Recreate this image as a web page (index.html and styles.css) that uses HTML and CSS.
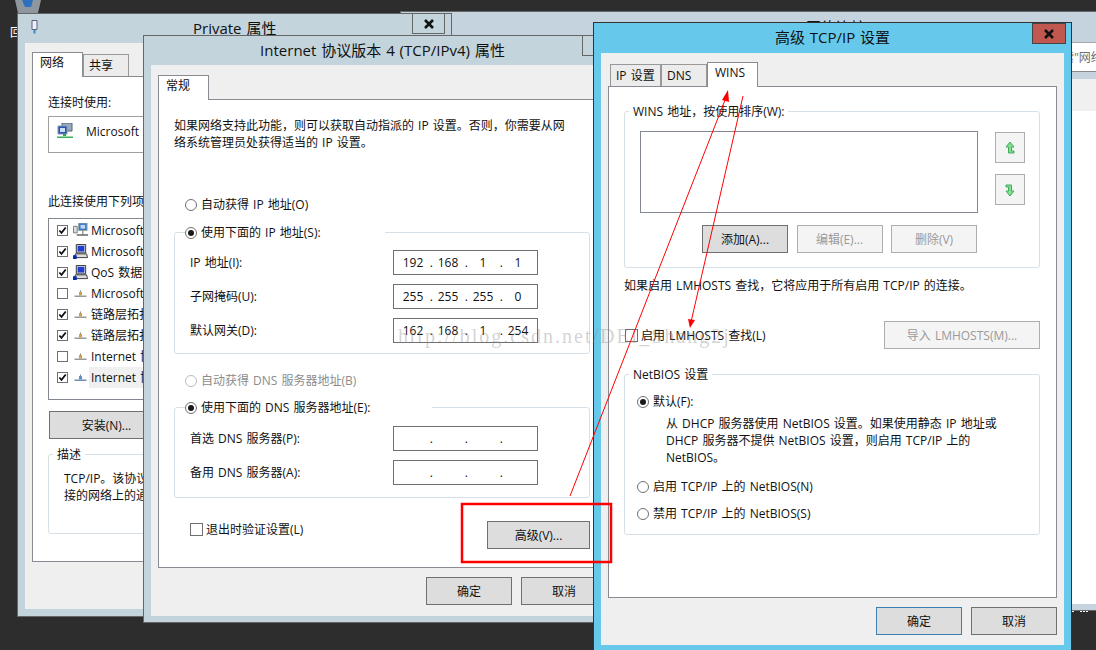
FILE: index.html
```html
<!DOCTYPE html>
<html lang="zh-CN">
<head>
    <meta charset="UTF-8">
    <title>高级 TCP/IP 设置</title>
    <link rel="stylesheet" href="styles.css">
</head>
<body>
<svg class="defs" width="0" height="0">
    <symbol id="ic-check" viewBox="0 0 10 10"><path d="M1.5 5l2.4 2.6L8.6 1.6" fill="none" stroke="#111" stroke-width="2"/></symbol>
    <symbol id="ic-proto" viewBox="0 0 15 15"><path d="M1.5 9.5h12v1.5h-12z" fill="#9a9a9a"/><path d="M6 6h3v3.5H6z" fill="#c9a24a"/><path d="M7 4.5h1V6H7z" fill="#8a8a8a"/></symbol>
    <symbol id="ic-proto-blue" viewBox="0 0 15 15"><path d="M1.5 9.5h12v1.5h-12z" fill="#6f8fb5"/><path d="M6 6h3v3.5H6z" fill="#5b93c9"/><path d="M7 4.5h1V6H7z" fill="#7a8a9a"/></symbol>
    <symbol id="ic-pc" viewBox="0 0 16 16"><path d="M3.5 0.5h10v9h-10z" fill="#ccd" stroke="#333"/><path d="M5 2h7v6H5z" fill="#1f3fd0"/><path d="M2.5 10.5h12l1 4h-14z" fill="#ddd" stroke="#333"/><path d="M0 12h4v4H0z" fill="#0a2bb0"/></symbol>
    <symbol id="ic-client" viewBox="0 0 16 16"><path d="M0.5 3.5h4v7h-4z" fill="#ddd" stroke="#777"/><path d="M6 0h9v8H6z" fill="#3d72c8" stroke="#8aa"/><path d="M8 2h5v4H8z" fill="#bcd7f2"/><path d="M10 8h1v4h-1zM4 12h12v1.5H4z" fill="#666"/></symbol>
    <symbol id="ic-adapter" viewBox="0 0 16 16"><path d="M5 0h10v8H5z" fill="#9ab" stroke="#567"/><path d="M1 3h9v8H1z" fill="#2553b8" stroke="#89a"/><path d="M3 5h5v4H3z" fill="#cfe0f5"/><path d="M6 11h3v2H6z" fill="#2aa84a"/><path d="M0 13.5h16V15H0z" fill="#35b25c"/></symbol>
    <symbol id="ic-close" viewBox="0 0 12 10"><path d="M2 1l8 8M10 1L2 9" stroke="#111" stroke-width="2.6" fill="none"/></symbol>
</svg>

<div class="desktop">
    <svg class="bin" viewBox="0 0 26 13"><path d="M0 0h26l-3 13H3z" fill="#8f979e"/><path d="M7 0h11l-2 7h-6z" fill="#2f6fc0"/></svg>
    <div class="desk-label">回收站</div>
    <div class="desk-spots"></div>

    <!-- network connections, behind everything -->
    <section class="win win-back">
        <div class="back-title">网络连接</div>
        <div class="back-search">搜索"网络连接"</div>
        <div class="back-toolbar"></div>
        <div class="back-files"></div>
    </section>

    <!-- Private properties -->
    <section class="win win-private">
        <header class="win-head">
            <svg class="head-icon" viewBox="0 0 8 14"><path d="M1.5 .5h5v9h-5z" fill="#eef" stroke="#567"/><path d="M3 10h2v3.5H3z" fill="#38c"/></svg>
            <h1 class="win-title title-private">Private 属性</h1>
            <button class="close close-plain"><svg><use href="#ic-close"/></svg></button>
        </header>
        <div class="win-body">
            <div class="tabs">
                <div class="tab tab-on tab-w51">网络</div>
                <div class="tab tab-w46">共享</div>
            </div>
            <div class="page page-private">
                <p class="line">连接时使用:</p>
                <div class="adapter-box">
                    <svg class="icon16"><use href="#ic-adapter"/></svg>
                    <span>Microsoft Hyper-V 网络适配器</span>
                </div>
                <p class="line items-label">此连接使用下列项目(O):</p>
                <ul class="items">
                    <li><span class="check on"><svg><use href="#ic-check"/></svg></span><svg class="icon15"><use href="#ic-client"/></svg>Microsoft 网络客户端</li>
                    <li><span class="check on"><svg><use href="#ic-check"/></svg></span><svg class="icon15"><use href="#ic-pc"/></svg>Microsoft 网络的文件和打印机共享</li>
                    <li><span class="check on"><svg><use href="#ic-check"/></svg></span><svg class="icon15"><use href="#ic-pc"/></svg>QoS 数据包计划程序</li>
                    <li><span class="check"></span><svg class="icon15"><use href="#ic-proto"/></svg>Microsoft 网络适配器多路传送器协议</li>
                    <li><span class="check on"><svg><use href="#ic-check"/></svg></span><svg class="icon15"><use href="#ic-proto"/></svg>链路层拓扑发现映射器 I/O 驱动程序</li>
                    <li><span class="check on"><svg><use href="#ic-check"/></svg></span><svg class="icon15"><use href="#ic-proto"/></svg>链路层拓扑发现响应程序</li>
                    <li><span class="check"></span><svg class="icon15"><use href="#ic-proto"/></svg>Internet 协议版本 6 (TCP/IPv6)</li>
                    <li><span class="check on"><svg><use href="#ic-check"/></svg></span><svg class="icon15"><use href="#ic-proto-blue"/></svg><span class="item-sel">Internet 协议版本 4 (TCP/IPv4)</span></li>
                </ul>
                <button class="btn btn-install">安装(N)...</button>
                <div class="group group-desc">
                    <div class="legend">描述</div>
                    <p class="line">TCP/IP。该协议是默认的广域网络协议，它提供在不同的<br>接的网络上的通讯。</p>
                </div>
            </div>
        </div>
    </section>

    <!-- IPv4 properties -->
    <section class="win win-ipv4">
        <header class="win-head">
            <h1 class="win-title">Internet 协议版本 4 (TCP/IPv4) 属性</h1>
            <button class="close close-plain"><svg><use href="#ic-close"/></svg></button>
        </header>
        <div class="win-body">
            <div class="tabs">
                <div class="tab tab-on tab-w51">常规</div>
            </div>
            <div class="page page-ipv4">
                <p class="line">如果网络支持此功能，则可以获取自动指派的 IP 设置。否则，你需要从网<br>络系统管理员处获得适当的 IP 设置。</p>
                <label class="radio-row auto-ip"><span class="radio"></span>自动获得 IP 地址(O)</label>
                <div class="group group-ip">
                    <label class="radio-row legend-radio legend-ip"><span class="radio on"></span>使用下面的 IP 地址(S):</label>
                    <div class="field"><span>IP 地址(I):</span>
                        <div class="ip"><span class="oct">192</span><span class="dot">.</span><span class="oct">168</span><span class="dot">.</span><span class="oct">1</span><span class="dot">.</span><span class="oct">1</span></div></div>
                    <div class="field"><span>子网掩码(U):</span>
                        <div class="ip"><span class="oct">255</span><span class="dot">.</span><span class="oct">255</span><span class="dot">.</span><span class="oct">255</span><span class="dot">.</span><span class="oct">0</span></div></div>
                    <div class="field"><span>默认网关(D):</span>
                        <div class="ip"><span class="oct">162</span><span class="dot">.</span><span class="oct">168</span><span class="dot">.</span><span class="oct">1</span><span class="dot">.</span><span class="oct">254</span></div></div>
                </div>
                <label class="radio-row auto-dns off"><span class="radio"></span>自动获得 DNS 服务器地址(B)</label>
                <div class="group group-dns">
                    <label class="radio-row legend-radio legend-dns"><span class="radio on"></span>使用下面的 DNS 服务器地址(E):</label>
                    <div class="field"><span>首选 DNS 服务器(P):</span>
                        <div class="ip"><span class="oct"></span><span class="dot">.</span><span class="oct"></span><span class="dot">.</span><span class="oct"></span><span class="dot">.</span><span class="oct"></span></div></div>
                    <div class="field"><span>备用 DNS 服务器(A):</span>
                        <div class="ip"><span class="oct"></span><span class="dot">.</span><span class="oct"></span><span class="dot">.</span><span class="oct"></span><span class="dot">.</span><span class="oct"></span></div></div>
                </div>
                <div class="verify-row">
                    <label class="check-row verify-check"><span class="check big"></span>退出时验证设置(L)</label>
                    <button class="btn btn-advanced">高级(V)...</button>
                </div>
            </div>
            <div class="foot">
                <button class="btn">确定</button>
                <button class="btn">取消</button>
            </div>
        </div>
    </section>

    <!-- advanced TCP/IP, active window -->
    <section class="win win-adv">
        <header class="win-head">
            <h1 class="win-title">高级 TCP/IP 设置</h1>
            <button class="close close-red"><svg><use href="#ic-close"/></svg></button>
        </header>
        <div class="win-body">
            <div class="tabs tabs-adv">
                <div class="tab tab-w51">IP 设置</div>
                <div class="tab tab-w46">DNS</div>
                <div class="tab tab-on tab-w51">WINS</div>
            </div>
            <div class="page page-adv">
                <div class="group group-wins">
                    <div class="legend">WINS 地址，按使用排序(W):</div>
                    <div class="wins-top">
                        <div class="wins-list"></div>
                        <div class="arrows">
                            <button class="arrow-btn"><svg viewBox="0 0 12 14"><path d="M6 1L2 6h2.5v6H10v-2H7.5V6H10z" fill="#7fe08c" stroke="#45a860"/></svg></button>
                            <button class="arrow-btn"><svg viewBox="0 0 12 14"><path d="M6 13L2 8h2.5V4H2V2h5.5v6H10z" fill="#7fe08c" stroke="#45a860"/></svg></button>
                        </div>
                    </div>
                    <div class="wins-btns">
                        <button class="btn">添加(A)...</button>
                        <button class="btn btn-off">编辑(E)...</button>
                        <button class="btn btn-off">删除(V)</button>
                    </div>
                </div>
                <p class="line lm-note">如果启用 LMHOSTS 查找，它将应用于所有启用 TCP/IP 的连接。</p>
                <div class="lm-row">
                    <label class="check-row"><span class="check big"></span>启用 LMHOSTS 查找(L)</label>
                    <button class="btn btn-off btn-import">导入 LMHOSTS(M)...</button>
                </div>
                <div class="group group-netbios">
                    <div class="legend">NetBIOS 设置</div>
                    <label class="radio-row"><span class="radio on"></span>默认(F):</label>
                    <p class="line nb-text">从 DHCP 服务器使用 NetBIOS 设置。如果使用静态 IP 地址或<br>DHCP 服务器不提供 NetBIOS 设置，则启用 TCP/IP 上的<br>NetBIOS。</p>
                    <label class="radio-row nb-on"><span class="radio"></span>启用 TCP/IP 上的 NetBIOS(N)</label>
                    <label class="radio-row nb-off"><span class="radio"></span>禁用 TCP/IP 上的 NetBIOS(S)</label>
                </div>
            </div>
            <div class="foot foot-adv">
                <button class="btn btn-default">确定</button>
                <button class="btn">取消</button>
            </div>
        </div>
    </section>

    <div class="watermark">http://blog.csdn.net/DEI_Shang2j</div>

    <svg class="marks" width="1096" height="650" viewBox="0 0 1096 650">
        <path d="M570 496L727 95" stroke="#f00" fill="none"/>
        <path d="M728 90L722 100L729 102Z" fill="#f00"/>
        <path d="M743 96L691 322" stroke="#f00" fill="none"/>
        <path d="M690 328L688 319L695 320Z" fill="#f00"/>
        <rect x="462" y="504" width="149" height="58" fill="none" stroke="#f00" stroke-width="2.5"/>
    </svg>
</div>
</body>
</html>
```
FILE: styles.css
```css
* {
    box-sizing: border-box;
}
body {
    margin: 0;
    font-family: "Open Sans", "Noto Sans CJK SC", sans-serif;
    font-size: 12px;
    line-height: 17px;
    word-spacing: 1px;
    color: #111;
}
p, ul, h1 {
    margin: 0;
    padding: 0;
}
button {
    font: inherit;
    word-spacing: inherit;
    color: inherit;
}
.defs {
    position: absolute;
}
.desktop {
    position: relative;
    width: 1096px;
    height: 650px;
    overflow: hidden;
    background: #2d2d2d;
}
.bin {
    position: absolute;
    left: 15px;
    top: 0;
    width: 26px;
    height: 13px;
}
.desk-label {
    position: absolute;
    left: 10px;
    top: 24px;
    color: #fff;
}
.desk-spots {
    position: absolute;
    left: 1072px;
    top: 611px;
    width: 2px;
    height: 1px;
    background: #fff;
    box-shadow: 8px 0 #fff, 11px 0 #fff, 14px 0 #fff;
}

/* windows */
.win {
    position: absolute;
    background: #c3d4dc;
    border: 1px solid #666;
}
.win-head {
    position: relative;
    display: flex;
    justify-content: center;
    align-items: center;
    padding-bottom: 2px;
}
.win-title {
    font-size: 15px;
    font-weight: 400;
    line-height: 20px;
}
.win-body {
    display: flex;
    flex-direction: column;
    margin: 0 7px;
    background: #efefef;
    padding: 0 7px;
}
.head-icon {
    position: absolute;
    left: 12px;
    top: 6px;
    width: 9px;
    height: 14px;
}
.close {
    position: absolute;
    top: -1px;
    width: 33px;
    height: 21px;
    padding: 0;
    display: flex;
    align-items: center;
    justify-content: center;
    border: 1px solid #666;
    background: transparent;
}
.close svg {
    width: 12px;
    height: 10px;
}
.close-plain {
    right: 6px;
}
.close-red {
    top: 0;
    right: 5px;
    width: 34px;
    background: #c0584f;
    border-color: #444;
}

/* back window */
.win-back {
    left: 400px;
    top: 11px;
    width: 800px;
    height: 600px;
    background: #c5d3de;
    display: flex;
    flex-direction: column;
    padding-bottom: 6px;
}
.back-title {
    height: 30px;
    padding: 7px 0 0 405px;
    font-size: 15px;
}
.back-search {
    height: 30px;
    padding: 6px 0 0 649px;
    background: #fff;
    border-top: 1px solid #a8a8a8;
    border-bottom: 1px solid #8a8a8a;
    color: #707070;
}
.back-toolbar {
    height: 32px;
    margin-top: 7px;
    background: #f0f0f0;
}
.back-files {
    flex: 1;
    background: #fff;
}

/* private window */
.win-private {
    left: 17px;
    top: 13px;
    width: 435px;
    height: 604px;
}
.win-private .win-head {
    height: 29px;
    justify-content: flex-start;
}
.title-private {
    margin-left: 175px;
}
.win-private .win-body {
    height: 566px;
    padding-top: 9px;
}
.page-private {
    height: 486px;
    padding: 17px 0 0 15px;
}

/* ipv4 window */
.win-ipv4 {
    left: 143px;
    top: 35px;
    width: 479px;
    height: 588px;
}
.win-ipv4 .win-head {
    height: 29px;
}
.win-ipv4 .win-body {
    height: 551px;
    padding-top: 10px;
}
.page-ipv4 {
    height: 469px;
    padding: 17px 16px 0 15px;
}

/* advanced window */
.win-adv {
    left: 593px;
    top: 22px;
    width: 479px;
    height: 640px;
    background: #66c9eb;
    border-color: #333;
}
.win-adv .win-head {
    height: 30px;
}
.win-adv .win-body {
    height: 592px;
    padding-top: 9px;
}
.page-adv {
    height: 512px;
    padding: 24px 16px 0 15px;
}

/* tabs */
.tabs {
    display: flex;
    align-items: flex-end;
    height: 25px;
    position: relative;
    z-index: 1;
    margin-bottom: -1px;
}
.tabs-adv {
    padding-left: 2px;
}
.tab {
    height: 22px;
    margin-bottom: 1px;
    padding: 2px 0 0 5px;
    background: #ececec;
    border: 1px solid #999;
    border-bottom: none;
}
.tab-on {
    height: 25px;
    margin-bottom: 0;
    padding: 1px 0 0 7px;
    background: #fff;
    border-color: #8a8a92;
}
.tab-w46 {
    width: 46px;
}
.tab-w51 {
    width: 51px;
}
.page {
    background: #fff;
    border: 1px solid #8a8a92;
}

/* form bits */
.group {
    position: relative;
    border: 1px solid #d6e0e6;
    border-radius: 3px;
}
.legend {
    position: absolute;
    left: 4px;
    top: -9px;
    padding: 0 4px;
    background: #fff;
}
.btn {
    width: 86px;
    height: 28px;
    padding: 0;
    background: #dddddd;
    border: 1px solid #707070;
}
.btn-off {
    background: #f4f4f4;
    border-color: #adadad;
    color: #9a9a9a;
}
.btn-default {
    border-color: #3c7fb1;
}
.foot {
    display: flex;
    justify-content: flex-end;
    gap: 9px;
    margin-top: 9px;
}
.radio-row, .check-row {
    display: flex;
    align-items: center;
    gap: 4px;
    height: 17px;
}
.radio {
    position: relative;
    width: 12px;
    height: 12px;
    border: 1px solid #707070;
    border-radius: 50%;
    background: #fff;
}
.radio.on::after {
    content: "";
    position: absolute;
    left: 2px;
    top: 2px;
    width: 6px;
    height: 6px;
    border-radius: 50%;
    background: #1a1a1a;
}
.off {
    color: #8c8c8c;
}
.off .radio {
    border-color: #bcbcbc;
}
.check {
    display: flex;
    width: 11px;
    height: 11px;
    flex: none;
    border: 1px solid #707070;
    background: #fff;
}
.check svg {
    width: 9px;
    height: 9px;
}
.check.big {
    width: 13px;
    height: 13px;
}
.check-row {
    gap: 3px;
}

/* private page */
.adapter-box {
    display: flex;
    align-items: center;
    gap: 13px;
    height: 37px;
    margin-top: 5px;
    margin-bottom: 40px;
    padding: 0 0 7px 8px;
    border: 1px solid #a0a0a0;
    white-space: nowrap;
}
.icon16 {
    width: 16px;
    height: 16px;
    flex: none;
}
.icon15 {
    width: 15px;
    height: 15px;
    margin: 0 3px 0 5px;
    flex: none;
}
.items-label {
    margin-bottom: 8px;
}
.items {
    height: 182px;
    padding: 1px 0 0 8px;
    list-style: none;
    border: 1px solid #828790;
}
.items li {
    display: flex;
    align-items: center;
    height: 21px;
    white-space: nowrap;
}
.item-sel {
    width: 300px;
    height: 21px;
    margin-left: -2px;
    padding: 2px 0 0 2px;
    background: #f0f0f0;
}
.btn-install {
    display: block;
    width: 115px;
    height: 28px;
    margin: 11px 0 15px 1px;
}
.group-desc {
    height: 80px;
    padding: 15px 0 0 15px;
}

/* ipv4 page */
.auto-ip {
    margin: 45px 0 0 11px;
}
.group-ip {
    height: 122px;
    margin-top: 19px;
    padding: 17px 0 0 15px;
}
.legend-radio {
    position: absolute;
    left: 10px;
    top: -9px;
    background: #fff;
}
.legend-ip {
    width: 200px;
}
.legend-dns {
    width: 247px;
}
.field {
    display: flex;
    align-items: center;
    height: 25px;
    margin-bottom: 9px;
}
.field > span {
    width: 203px;
}
.ip {
    display: flex;
    align-items: center;
    width: 145px;
    height: 25px;
    padding-left: 4px;
    border: 1px solid #707070;
}
.oct {
    width: 30px;
    text-align: center;
}
.dot {
    width: 5px;
    text-align: right;
}
.auto-dns {
    margin: 18px 0 0 11px;
}
.group-dns {
    height: 91px;
    margin-top: 18px;
    padding: 18px 0 0 15px;
}
.verify-row {
    display: flex;
    justify-content: space-between;
    align-items: center;
    margin-top: 23px;
    padding-left: 16px;
}
.verify-check {
    margin-bottom: 11px;
}
.btn-advanced {
    width: 103px;
}

/* advanced page */
.group-wins {
    height: 157px;
    padding: 19px 0 0 15px;
}
.wins-top {
    display: flex;
    gap: 17px;
}
.wins-list {
    width: 338px;
    height: 82px;
    border: 1px solid #828790;
}
.arrows {
    display: flex;
    flex-direction: column;
    gap: 11px;
    margin-top: 1px;
}
.arrow-btn {
    display: flex;
    align-items: center;
    justify-content: center;
    width: 30px;
    height: 31px;
    padding: 0;
    background: #f4f4f4;
    border: 1px solid #adadad;
}
.arrow-btn svg {
    width: 12px;
    height: 14px;
}
.wins-btns {
    display: flex;
    justify-content: flex-end;
    gap: 8.5px;
    width: 337px;
    margin-top: 12px;
}
.lm-note {
    margin-top: 9px;
}
.lm-row {
    display: flex;
    justify-content: space-between;
    align-items: center;
    margin-top: 27px;
    padding-left: 1px;
}
.btn-import {
    width: 156px;
}
.group-netbios {
    height: 161px;
    margin-top: 25px;
    padding: 18px 0 0 12px;
}
.nb-text {
    margin: 5px 0 0 29px;
}
.nb-on {
    margin-top: 12px;
}
.nb-off {
    margin-top: 10px;
}

/* overlays */
.watermark {
    position: absolute;
    left: 398px;
    top: 324px;
    font-family: "Liberation Serif", serif;
    font-size: 20px;
    line-height: 24px;
    letter-spacing: 2px;
    word-spacing: 0;
    color: rgba(130, 130, 130, 0.36);
    white-space: nowrap;
}
.marks {
    position: absolute;
    left: 0;
    top: 0;
}
```
